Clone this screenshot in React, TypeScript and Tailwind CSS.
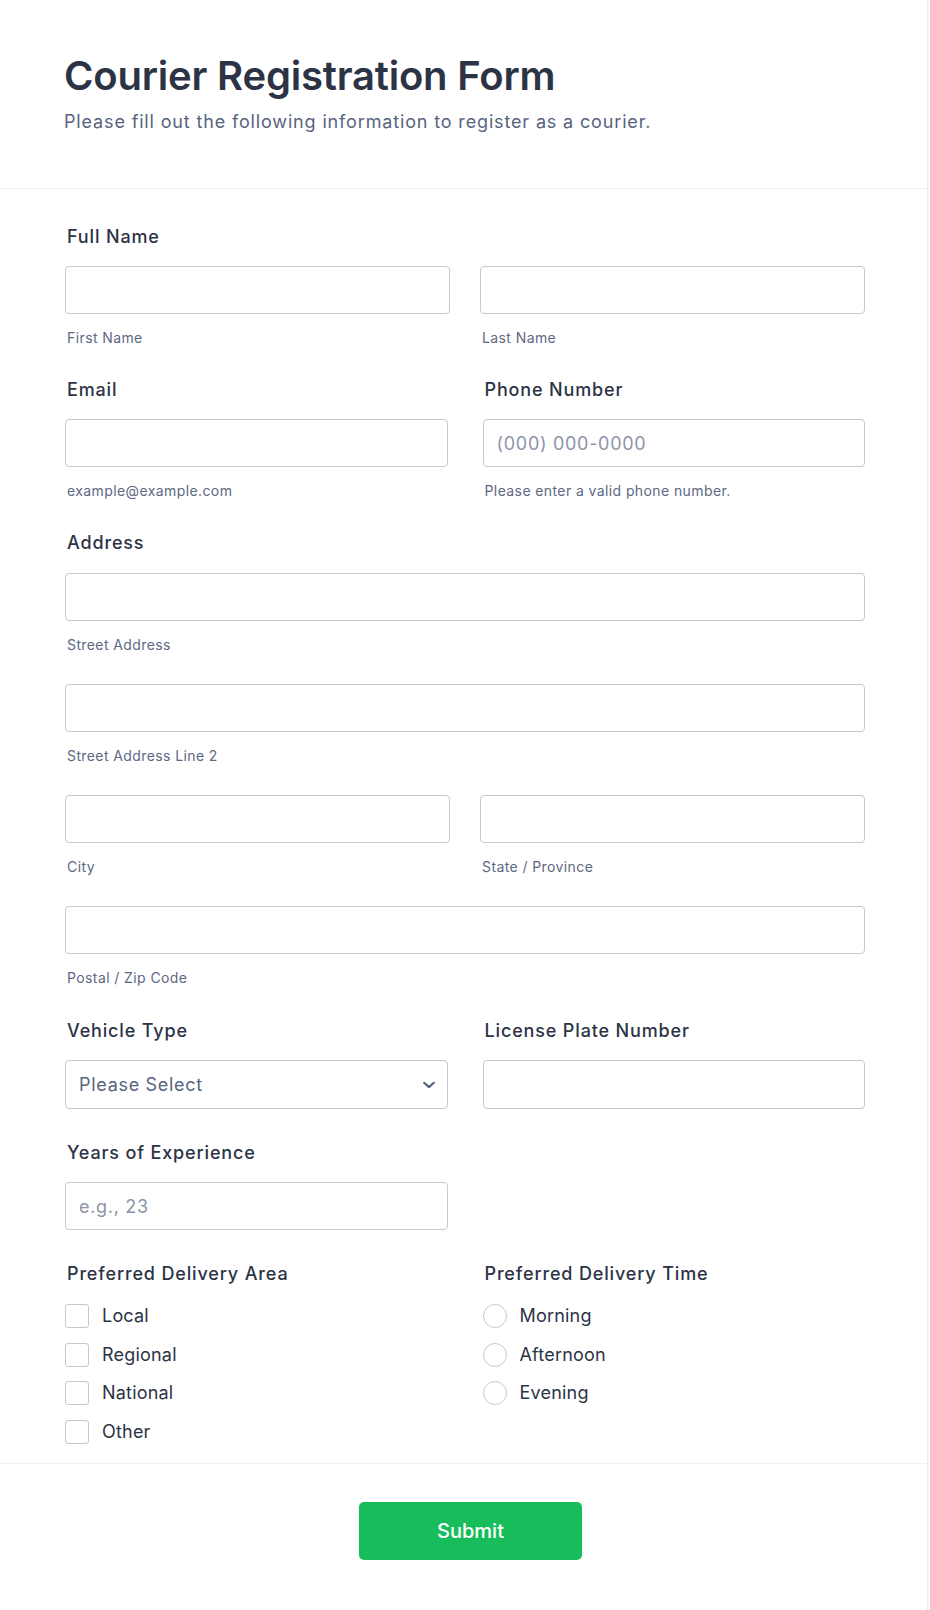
import React from 'react';

const inputCls =
  'h-12 w-full rounded-[4px] border border-[#c3c8d4] bg-white px-[13px] text-lg tracking-[0.7px] text-[#2c3345] placeholder:text-[#8d94a8] outline-none';

function Label({ children }: { children: React.ReactNode }) {
  return (
    <label className="block pl-[2px] text-lg leading-7 font-medium tracking-[0.85px] text-[#2c3345]">{children}</label>
  );
}

function Sub({ children }: { children: React.ReactNode }) {
  return <span className="mt-[14px] block pl-[2px] text-sm leading-5 tracking-[0.4px] text-[#5d6882]">{children}</span>;
}

function TextField({ sub, placeholder }: { sub?: string; placeholder?: string }) {
  return (
    <div className="flex flex-col">
      <input type="text" placeholder={placeholder} className={inputCls} />
      {sub && <Sub>{sub}</Sub>}
    </div>
  );
}

export default function App() {
  const [area, setArea] = React.useState<string[]>([]);
  const [time, setTime] = React.useState<string | null>(null);

  return (
    <div className="min-h-screen bg-[#f7f8fb] font-[Inter,sans-serif]">
      <div className="w-[928px] border-r border-[#e9ebf1] bg-white">
        <header className="border-b border-[#eff0f5] pt-[52px] pr-[62px] pb-[52px] pl-[64px]">
          <h1 className="text-[40px] leading-[48px] font-semibold tracking-[-0.2px] text-[#2c3345]">
            Courier Registration Form
          </h1>
          <p className="mt-2 text-lg leading-7 tracking-[0.85px] text-[#57647e]">
            Please fill out the following information to register as a courier.
          </p>
        </header>

        <form className="pt-[34px] pr-[62px] pb-[19px] pl-[65px]" onSubmit={(e) => e.preventDefault()}>
          {/* full name */}
          <div>
            <Label>Full Name</Label>
            <div className="mt-[15px] grid grid-cols-2 gap-x-[30px]">
              <TextField sub="First Name" />
              <TextField sub="Last Name" />
            </div>
          </div>

          <div className="mt-7 grid grid-cols-2 gap-x-[35px]">
            <div>
              <Label>Email</Label>
              <div className="mt-[15px]">
                <TextField sub="example@example.com" />
              </div>
            </div>
            <div>
              <Label>Phone Number</Label>
              <div className="mt-[15px]">
                <TextField placeholder="(000) 000-0000" sub="Please enter a valid phone number." />
              </div>
            </div>
          </div>

          {/* address */}
          <div className="mt-7">
            <Label>Address</Label>
            <div className="mt-4 flex flex-col gap-[29px]">
              <TextField sub="Street Address" />
              <TextField sub="Street Address Line 2" />
              <div className="grid grid-cols-2 gap-x-[30px]">
                <TextField sub="City" />
                <TextField sub="State / Province" />
              </div>
              <TextField sub="Postal / Zip Code" />
            </div>
          </div>

          <div className="mt-[29px] grid grid-cols-2 gap-x-[35px]">
            <div>
              <Label>Vehicle Type</Label>
              <div className="relative mt-[15px]">
                <select defaultValue="" className={inputCls + ' h-[49px] appearance-none text-[#57647e]'}>
                  <option value="" disabled>
                    Please Select
                  </option>
                  <option>Bicycle</option>
                  <option>Motorcycle</option>
                  <option>Car</option>
                  <option>Van</option>
                  <option>Truck</option>
                </select>
                <svg
                  className="pointer-events-none absolute top-1/2 right-[13px] h-[7px] w-[12px] -translate-y-1/2"
                  viewBox="0 0 12 7"
                  fill="none"
                >
                  <path d="M1.2 1.2 6 5.6l4.8-4.4" stroke="#57647e" strokeWidth="2.2" strokeLinecap="round" strokeLinejoin="round" />
                </svg>
              </div>
            </div>
            <div>
              <Label>License Plate Number</Label>
              <div className="mt-[15px]">
                <input type="text" className={inputCls + ' h-[49px]'} />
              </div>
            </div>
          </div>

          <div className="mt-[30px] grid grid-cols-2 gap-x-[35px]">
            <div>
              <Label>Years of Experience</Label>
              <div className="mt-[15px]">
                <TextField placeholder="e.g., 23" />
              </div>
            </div>
          </div>

          <div className="mt-[30px] grid grid-cols-2 gap-x-[35px]">
            <div>
              <Label>Preferred Delivery Area</Label>
              <div className="mt-4 flex flex-col gap-[14.5px]">
                {['Local', 'Regional', 'National', 'Other'].map((opt) => (
                  <label key={opt} className="flex h-6 items-center gap-[13px] text-lg tracking-[0.2px] text-[#2c3345]">
                    <input
                      type="checkbox"
                      checked={area.includes(opt)}
                      onChange={() =>
                        setArea(area.includes(opt) ? area.filter((a) => a !== opt) : [...area, opt])
                      }
                      className="h-6 w-6 shrink-0 appearance-none rounded-[3px] border border-[#c3c8d4] bg-white checked:border-[#18bd5b] checked:bg-[#18bd5b]"
                    />
                    {opt}
                  </label>
                ))}
              </div>
            </div>
            <div>
              <Label>Preferred Delivery Time</Label>
              <div className="mt-4 flex flex-col gap-[14.5px]">
                {['Morning', 'Afternoon', 'Evening'].map((opt) => (
                  <label key={opt} className="flex h-6 items-center gap-[13px] text-lg tracking-[0.2px] text-[#2c3345]">
                    <input
                      type="radio"
                      name="time"
                      checked={time === opt}
                      onChange={() => setTime(opt)}
                      className="h-6 w-6 shrink-0 appearance-none rounded-full border border-[#c3c8d4] bg-white checked:border-[6px] checked:border-[#18bd5b]"
                    />
                    {opt}
                  </label>
                ))}
              </div>
            </div>
          </div>
        </form>

        <footer className="flex justify-center border-t border-[#eff0f5] pt-[38px] pb-[51px] pl-[14px]">
          <button
            type="submit"
            className="h-[58px] w-[223px] rounded-[5px] bg-[#18bd5b] text-xl font-medium text-white"
          >
            Submit
          </button>
        </footer>
      </div>
    </div>
  );
}
